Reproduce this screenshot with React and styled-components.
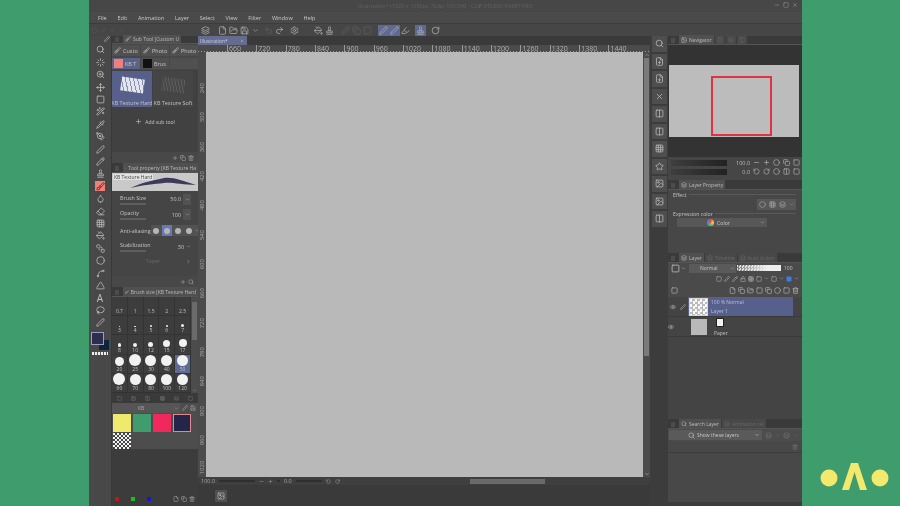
import React from "react";
import styled, { createGlobalStyle } from "styled-components";
import {
  Search, Loader, ZoomIn, Move, Square, Wand2, Pipette, PenTool, Pen, Pencil, Brush, Eraser, Droplet,
  Stamp, Grid3x3, PaintBucket, SquareStack, Circle, Spline, Triangle, Lasso, Plus, Copy, Trash2,
  File, FolderOpen, Save, Undo2, Redo2, Settings, FileUp, FileDown, X, Columns2, Star, Image, Eye,
  ChevronDown, ChevronUp, ChevronLeft, ChevronRight, ChevronsLeft, Lock, Layers, Minus,
  RotateCw, RotateCcw, Highlighter,
} from "lucide-react";

const Global = createGlobalStyle`
  html, body { margin: 0; padding: 0; background: #3f9d6d; }
  body { font-family: "Open Sans", "Liberation Sans", sans-serif; }
`;

const Stage = styled.div`
  display: flex;
  width: 900px;
  height: 506px;
  overflow: hidden;
`;

const GreenLeft = styled.div`
  width: 89px;
  background: #3f9d6d;
`;

const GreenRight = styled.div`
  width: 98px;
  background: #3f9d6d;
  display: flex;
  align-items: flex-end;
  padding: 0 0 14px 18px;
  box-sizing: border-box;
`;

const Window = styled.div`
  width: 713px;
  display: flex;
  flex-direction: column;
  background: #444;
  color: #c4c4c4;
  filter: blur(0.35px);
`;

const TitleBar = styled.div`
  height: 12px;
  display: flex;
  align-items: center;
  justify-content: center;
  position: relative;
  background: #474747;
  font-size: 5.5px;
  color: #626262;
`;

const WinButtons = styled.div`
  position: absolute;
  right: 4px;
  top: 2px;
  display: flex;
  gap: 3px;
  color: #999;
`;

const MenuBar = styled.div`
  height: 11px;
  display: flex;
  align-items: center;
  gap: 10.7px;
  padding-left: 9px;
  background: #4a4a4a;
  font-size: 5.5px;
  color: #c8c8c8;
`;

const ToolBar = styled.div`
  height: 13px;
  display: flex;
  align-items: center;
  background: #464646;
  border-top: 1px solid #3c3c3c;
  box-sizing: border-box;
  color: #b0b0b0;
`;

const ToolLead = styled.div`
  width: 111px;
  flex: none;
  display: flex;
  align-items: center;
  gap: 4px;
  padding-left: 3px;
  box-sizing: border-box;
  color: #626262;
`;

const ToolBtn = styled.span`
  width: 11px;
  height: 11px;
  flex: none;
  display: inline-flex;
  align-items: center;
  justify-content: center;
  background: ${(p) => (p.$on ? "#5f6a94" : "transparent")};
  color: ${(p) => (p.$dim ? "#5e5e5e" : "inherit")};
`;

const ToolGap = styled.span`
  width: ${(p) => p.$w || 4}px;
  flex: none;
`;

const Body = styled.div`
  flex: 1;
  display: flex;
  min-height: 0;
`;

const ToolStrip = styled.div`
  width: 23px;
  display: flex;
  flex-direction: column;
  align-items: center;
  gap: 2.4px;
  background: #484848;
  border-right: 1px solid #383838;
  box-sizing: border-box;
  color: #c0c0c0;
`;

const StripHead = styled.div`
  width: 100%;
  height: 6.6px;
  flex: none;
  display: flex;
  align-items: center;
  justify-content: flex-end;
  padding-right: 1px;
  box-sizing: border-box;
`;

const StripIcon = styled.span`
  width: 10px;
  height: 10px;
  flex: none;
  display: flex;
  align-items: center;
  justify-content: center;
  font-size: 10px;
  line-height: 10px;
  background: ${(p) => (p.$on ? "#ef7f78" : "transparent")};
  color: ${(p) => (p.$on ? "#5a2020" : "inherit")};
`;

const ColorChip = styled.div`
  position: relative;
  width: 18px;
  height: 18px;
  margin-top: 2px;
  flex: none;
`;

const ChipBack = styled.div`
  position: absolute;
  right: 0;
  bottom: 0;
  width: 10px;
  height: 10px;
  background: #10233a;
`;

const ChipFront = styled.div`
  position: absolute;
  left: 0;
  top: 0;
  width: 11px;
  height: 11px;
  background: #2d2d4d;
  border: 1px solid #9a9fc0;
`;

const Stripes = styled.div`
  width: 16px;
  height: 3px;
  flex: none;
  background: repeating-linear-gradient(90deg, #eee 0 2px, #555 2px 3px);
`;

const LeftDock = styled.div`
  width: 86px;
  display: flex;
  flex-direction: column;
  background: #3c3c3c;
`;

const TabStrip = styled.div`
  height: ${(p) => p.$h || 10}px;
  flex: none;
  display: flex;
  align-items: flex-end;
  padding-left: 3px;
  gap: 1px;
  background: #3a3a3a;
  border-bottom: 1px solid #555;
  box-sizing: border-box;
  &::before {
    content: "";
    width: 4px;
    height: 5px;
    margin: 0 3px 1px 0;
    background: #4c4c4c;
  }
`;

const Tab = styled.div`
  height: ${(p) => p.$h || 9}px;
  display: flex;
  align-items: center;
  gap: 2px;
  padding: 0 2px;
  font-size: 5px;
  white-space: nowrap;
  overflow: hidden;
  background: ${(p) => (p.$dim ? "#484848" : "#505050")};
  color: ${(p) => (p.$dim ? "#6a6a6a" : "#bdbdbd")};
`;

const SubPanel = styled.div`
  height: 119px;
  flex: none;
  display: flex;
  flex-direction: column;
  background: #414141;
`;

const GroupRow = styled.div`
  height: 13px;
  flex: none;
  display: flex;
  align-items: center;
  gap: 1.5px;
  background: #474747;
`;

const GroupChip = styled.div`
  flex: ${(p) => (p.$fill ? 1 : "none")};
  width: ${(p) => p.$w || 27.5}px;
  height: 11px;
  display: flex;
  align-items: center;
  gap: 2px;
  padding-left: 2px;
  box-sizing: border-box;
  overflow: hidden;
  white-space: nowrap;
  font-size: 5.5px;
  background: ${(p) => (p.$on ? "#5a648a" : "#505050")};
`;

const ChipIcon = styled.span`
  width: 9px;
  height: 9px;
  flex: none;
  background: ${(p) => p.$bg};
`;

const TileRow = styled.div`
  display: flex;
  gap: 1px;
  margin-top: 1px;
`;

const Tile = styled.div`
  width: 40px;
  height: 36px;
  display: flex;
  flex-direction: column;
  align-items: center;
  justify-content: space-between;
  font-size: 5.4px;
  line-height: 7px;
  white-space: nowrap;
  overflow: hidden;
  padding-top: 7px;
  box-sizing: border-box;
  background: ${(p) => (p.$on ? "#56608a" : "#454545")};
`;

const TileArt = styled.div`
  width: 23px;
  height: 14px;
  transform: rotate(8deg);
  background: ${(p) =>
    p.$on
      ? "repeating-linear-gradient(70deg, #e4e4ee 0 3px, #8a90b0 3px 4px)"
      : "repeating-linear-gradient(70deg, #5c5c5c 0 1px, #494949 1px 3px)"};
`;

const AddSub = styled.div`
  display: flex;
  align-items: center;
  justify-content: center;
  gap: 3px;
  margin-top: 11px;
  font-size: 5px;
  color: #c8c8c8;
`;

const PanelFoot = styled.div`
  margin-top: auto;
  height: ${(p) => p.$h || 11}px;
  flex: none;
  display: flex;
  align-items: center;
  justify-content: flex-end;
  gap: 2px;
  padding-right: 4px;
  background: #484848;
  color: #aaa;
`;

const PropPanel = styled.div`
  height: 114px;
  flex: none;
  display: flex;
  flex-direction: column;
  background: #454545;
`;

const BrushPreview = styled.div`
  height: 18px;
  flex: none;
  position: relative;
  background: #c9c9c9;
`;

const PreviewLabel = styled.span`
  position: absolute;
  left: 1px;
  top: 1px;
  padding: 0 1px;
  background: #e2e2e2;
  color: #444;
  font-size: 5px;
`;

const PropRow = styled.div`
  height: ${(p) => p.$h}px;
  flex: none;
  display: flex;
  align-items: center;
  justify-content: space-between;
  padding: 0 7px 0 8px;
  font-size: 5.4px;
  white-space: nowrap;
`;

const PropLabel = styled.div`
  display: flex;
  flex-direction: column;
  gap: 1px;
`;

const MiniBar = styled.div`
  width: 26px;
  height: 2px;
  background: #5e5e5e;
`;

const PropValue = styled.div`
  display: flex;
  align-items: center;
  gap: 2px;
`;

const Square8 = styled.span`
  width: 8px;
  height: 11px;
  display: inline-flex;
  align-items: center;
  justify-content: center;
  background: #525252;
`;

const AaGroup = styled.div`
  display: flex;
  align-items: center;
  height: 11px;
  gap: 1px;
  background: #525252;
`;

const AaDot = styled.span`
  width: 10px;
  height: 11px;
  display: flex;
  align-items: center;
  justify-content: center;
  background: ${(p) => (p.$on ? "#6a78b0" : "transparent")};
  &::before {
    content: "";
    width: 6px;
    height: 6px;
    border-radius: 50%;
    background: #b5b5b5;
  }
`;

const TaperLabel = styled.span`
  flex: 1;
  text-align: center;
  color: #666;
`;

const SizeGrid = styled.div`
  height: 96px;
  flex: none;
  display: flex;
  background: #3d3d3d;
`;

const SizeCells = styled.div`
  width: 80px;
  display: grid;
  grid-template-columns: repeat(5, 1fr);
  grid-auto-rows: 19.2px;
`;

const SizeCell = styled.div`
  display: flex;
  flex-direction: column;
  align-items: center;
  justify-content: flex-end;
  padding-bottom: 1px;
  font-size: 5px;
  color: #c0c0c0;
  line-height: 6px;
  border-right: 1px solid #333;
  border-bottom: 1px solid #333;
  box-sizing: border-box;
  background: ${(p) => (p.$on ? "#5f6a94" : "transparent")};
`;

const SizeDot = styled.span`
  border-radius: 50%;
  background: #f2f2f2;
  flex: none;
  width: ${(p) => p.$d}px;
  height: ${(p) => p.$d}px;
`;

const ScrollTrack = styled.div`
  flex: 1;
  display: flex;
  flex-direction: column;
  background: #4c4c4c;
  padding: 5px 1px 0;
  color: #999;
`;

const ScrollThumb = styled.div`
  height: ${(p) => p.$h}px;
  margin-bottom: auto;
  background: #6a6a6a;
`;

const ColorPanel = styled.div`
  flex: 1;
  display: flex;
  flex-direction: column;
  background: #3c3c3c;
`;

const IconTabs = styled.div`
  height: 10px;
  flex: none;
  display: flex;
  align-items: center;
  justify-content: space-around;
  background: #3a3a3a;
  color: #7c7c7c;
`;

const SetRow = styled.div`
  height: 10px;
  flex: none;
  display: flex;
  align-items: center;
  gap: 2px;
  background: #4d4d4d;
  font-size: 5px;
  color: #aaa;
`;

const SetSelect = styled.div`
  width: 68px;
  height: 100%;
  display: flex;
  align-items: center;
  justify-content: space-between;
  padding: 0 1px 0 26px;
  box-sizing: border-box;
  background: #555;
`;

const Swatches = styled.div`
  height: 36px;
  flex: none;
  display: grid;
  grid-template-columns: repeat(4, 18px);
  grid-template-rows: 18px 16px;
  column-gap: 2px;
  row-gap: 1px;
  padding: 1px 0 0 1px;
  background: #4d4d4d;
  box-sizing: border-box;
`;

const Swatch = styled.div`
  background: ${(p) => p.$c};
  box-sizing: border-box;
  border: ${(p) => (p.$on ? "1px solid #e08a90" : "none")};
`;

const Checker = styled.div`
  background: repeating-conic-gradient(#444 0 25%, #f4f4f4 0 50%) 0 0 / 4px 4px;
`;

const ColorFoot = styled.div`
  margin-top: auto;
  height: 14px;
  flex: none;
  display: flex;
  align-items: center;
  padding: 0 3px;
  gap: 12px;
`;

const Tiny = styled.span`
  width: 4px;
  height: 4px;
  background: ${(p) => p.$c};
`;

const FootIcons = styled.span`
  margin-left: auto;
  display: flex;
  gap: 2px;
  color: #aaa;
`;

const Center = styled.div`
  width: 452px;
  display: flex;
  flex-direction: column;
  background: #3b3b3b;
`;

const DocTabs = styled.div`
  height: 9px;
  flex: none;
  display: flex;
  background: #3a3a3a;
`;

const DocTab = styled.div`
  width: 49px;
  display: flex;
  align-items: center;
  justify-content: space-between;
  padding: 0 3px 0 2px;
  box-sizing: border-box;
  background: #646c90;
  font-size: 5px;
  color: #c8cce0;
`;

const RulerTop = styled.div`
  height: 7px;
  flex: none;
  display: flex;
  align-items: flex-end;
  padding-left: 29px;
  background:
    repeating-linear-gradient(90deg, #999 0 1px, transparent 1px 3px) left bottom / 100% 1px no-repeat,
    #4b4b4b;
  font-size: 7px;
  line-height: 7px;
  color: #b0b0b0;
`;

const RulerMark = styled.span`
  width: 29.35px;
  flex: none;
  border-left: 1px solid #999;
  padding-left: 1px;
  box-sizing: border-box;
`;

const CanvasRow = styled.div`
  height: 425px;
  flex: none;
  display: flex;
`;

const RulerLeft = styled.div`
  width: 8px;
  flex: none;
  display: flex;
  flex-direction: column;
  padding-top: 12px;
  background: #4b4b4b;
  font-size: 6px;
  line-height: 8px;
  color: #a8a8a8;
  overflow: hidden;
`;

const RulerNum = styled.span`
  height: 29.35px;
  flex: none;
  writing-mode: vertical-rl;
  transform: rotate(180deg);
`;

const Paper = styled.div`
  flex: 1;
  background: #b9b9b9;
`;

const VScroll = styled.div`
  width: 7px;
  flex: none;
  display: flex;
  flex-direction: column;
  align-items: center;
  background: #4b4b4b;
  color: #bbb;
`;

const VThumb = styled.div`
  width: 5px;
  height: 298px;
  margin-bottom: auto;
  background: #7a7a7a;
`;

const StatusBar = styled.div`
  height: 8px;
  flex: none;
  display: flex;
  align-items: center;
  gap: 4px;
  padding-left: 3px;
  background: #3f3f3f;
  font-size: 5.5px;
  color: #a8a8a8;
`;

const ZoomSlider = styled.span`
  width: ${(p) => p.$w}px;
  height: 2px;
  background: #2f2f2f;
`;

const HThumb = styled.span`
  width: 75px;
  height: 5px;
  margin-left: 126px;
  background: #6a6a6a;
`;

const BottomDock = styled.div`
  flex: 1;
  display: flex;
  align-items: center;
  padding-left: 17px;
  background: #3a3a3a;
`;

const BottomButton = styled.span`
  width: 12px;
  height: 12px;
  display: flex;
  align-items: center;
  justify-content: center;
  background: #505050;
  color: #bbb;
`;

const RightStrip = styled.div`
  width: 18px;
  display: flex;
  flex-direction: column;
  align-items: center;
  gap: 2px;
  background: #3c3c3c;
  color: #bdbdbd;
`;

const RightBtn = styled.span`
  width: 15px;
  height: 15.5px;
  flex: none;
  display: flex;
  align-items: center;
  justify-content: center;
  background: #4e4e4e;
`;

const RightDock = styled.div`
  width: 134px;
  display: flex;
  flex-direction: column;
  background: #474747;
  border-bottom: 4px solid #3c3c3c;
  box-sizing: border-box;
`;

const NavDark = styled.div`
  height: 112px;
  flex: none;
  display: flex;
  flex-direction: column;
  justify-content: center;
  background: #333;
`;

const NavPaper = styled.div`
  height: 72px;
  margin: 0 3px 0 1px;
  display: flex;
  align-items: flex-end;
  padding: 0 0 1px 42px;
  background: #bcbcbc;
  box-sizing: border-box;
`;

const NavFrame = styled.div`
  width: 61px;
  height: 60px;
  border: 2px solid #e0323f;
  box-sizing: border-box;
`;

const NavControls = styled.div`
  height: 23px;
  flex: none;
  display: grid;
  grid-template-columns: 56px 1fr;
  grid-auto-rows: 9px;
  align-items: center;
  gap: 0 9px;
  padding: 1px 3px 0 3px;
  background: #464646;
  font-size: 5.5px;
  box-sizing: border-box;
`;

const Wedge = styled.span`
  height: 6px;
  background: linear-gradient(90deg, #3e3e3e, #222);
`;

const NavIcons = styled.span`
  display: flex;
  align-items: center;
  justify-content: flex-end;
  gap: 3px;
  color: #bbb;
`;

const EffectPanel = styled.div`
  height: 62px;
  flex: none;
  padding: 1px 6px 0 5px;
  font-size: 5.2px;
  background: #474747;
`;

const Legend = styled.div`
  display: flex;
  align-items: center;
  gap: 2px;
  height: 7px;
  &::after {
    content: "";
    flex: 1;
    height: 1px;
    background: #5a5a5a;
  }
`;

const EffectBtns = styled.div`
  width: 39px;
  height: 11px;
  margin: 1px 0 0 auto;
  display: flex;
  align-items: center;
  justify-content: space-around;
  background: #575757;
  color: #aaa;
`;

const ColorSelect = styled.div`
  width: 90px;
  height: 9px;
  margin: 1px 0 0 4px;
  padding: 0 2px 0 30px;
  display: flex;
  align-items: center;
  gap: 3px;
  box-sizing: border-box;
  background: #575757;
`;

const ColorWheel = styled.span`
  width: 7px;
  height: 7px;
  border-radius: 50%;
  background: conic-gradient(#e44, #ec4, #4c6, #48e, #e44);
`;

const LayerPanel = styled.div`
  height: 156px;
  flex: none;
  display: flex;
  flex-direction: column;
  background: #444;
`;

const BlendRow = styled.div`
  height: 10px;
  flex: none;
  display: flex;
  align-items: center;
  gap: 1px;
  padding-left: 3px;
  font-size: 5px;
  background: #4a4a4a;
`;

const BlendSelect = styled.div`
  width: 47px;
  height: 9px;
  margin-left: 2px;
  display: flex;
  align-items: center;
  justify-content: space-between;
  padding: 0 1px 0 11px;
  box-sizing: border-box;
  background: #5a5a5a;
`;

const Opacity = styled.span`
  width: 44px;
  height: 6px;
  margin-right: 2px;
  background:
    linear-gradient(90deg, transparent, #eee 70%),
    repeating-conic-gradient(#777 0 25%, #ddd 0 50%) 0 0 / 3px 3px;
`;

const IconRow = styled.div`
  height: ${(p) => p.$h}px;
  flex: none;
  display: flex;
  align-items: center;
  justify-content: flex-end;
  gap: 2px;
  padding: 0 3px;
  background: #4a4a4a;
  color: #bdbdbd;
`;

const LayerRow = styled.div`
  height: 20px;
  flex: none;
  display: flex;
  align-items: center;
  border-bottom: 1px solid #3a3a3a;
  box-sizing: border-box;
`;

const LayerFlags = styled.div`
  width: 20px;
  flex: none;
  display: flex;
  align-items: center;
  justify-content: space-around;
  color: #bbb;
`;

const LayerBody = styled.div`
  width: 105px;
  height: 100%;
  display: flex;
  align-items: center;
  gap: 3px;
  padding-left: 1px;
  box-sizing: border-box;
  font-size: 5px;
  background: ${(p) => (p.$on ? "#56608a" : "transparent")};
  color: ${(p) => (p.$on ? "#b8bfe0" : "#c0c0c0")};
`;

const Thumb = styled.div`
  width: 19px;
  height: 18px;
  flex: none;
  box-sizing: border-box;
  border: 1px solid #d8d8d8;
  background: repeating-conic-gradient(#bbb 0 25%, #f8f8f8 0 50%) 0 0 / 5px 5px;
`;

const PaperThumb = styled.div`
  width: 16px;
  height: 16px;
  flex: none;
  margin: 0 4px 0 2px;
  background: #b9b9b9;
`;

const LayerText = styled.div`
  display: flex;
  flex-direction: column;
  gap: 3px;
`;

const PaperGlyph = styled.span`
  width: 8px;
  height: 9px;
  margin-left: 2px;
  background: #f2f2f2;
  border: 1px solid #222;
  box-sizing: border-box;
`;

const SearchPanel = styled.div`
  flex: 1;
  display: flex;
  flex-direction: column;
  background: #484848;
`;

const SearchRow = styled.div`
  height: 12px;
  flex: none;
  display: flex;
  align-items: center;
  gap: 3px;
  font-size: 5px;
  color: #777;
  background: #4c4c4c;
`;

const SearchSelect = styled.div`
  width: 93px;
  height: 10px;
  margin-left: 1px;
  display: flex;
  align-items: center;
  gap: 2px;
  padding: 0 2px 0 19px;
  box-sizing: border-box;
  background: #5a5a5a;
  color: #c8c8c8;
`;

const SearchFoot = styled.div`
  height: 11px;
  flex: none;
  display: flex;
  justify-content: flex-end;
  align-items: center;
  padding-right: 4px;
  border-bottom: 1px solid #3c3c3c;
  color: #777;
`;

const Push = styled.span`
  margin-left: auto;
`;

const Logo = () => (
  <svg width="70" height="30" viewBox="0 0 70 30">
    <circle cx="9" cy="16" r="8.5" fill="#f3e96d" />
    <circle cx="60" cy="16" r="8.5" fill="#f3e96d" />
    <path d="M22 28 L31 1 H38 L47 28 H40 L34.5 10 L29 28 Z" fill="#f3e96d" />
  </svg>
);

const menus = ["File", "Edit", "Animation", "Layer", "Select", "View", "Filter", "Window", "Help"];
const tools = [
  Search, Loader, ZoomIn, Move, Square, Wand2, Pipette, PenTool, Pen, Pencil, Stamp, Brush,
  Droplet, Eraser, Grid3x3, PaintBucket, SquareStack, Circle, Spline, Triangle,
];
const rightBtns = [Search, FileUp, FileDown, X, Columns2, Columns2, Grid3x3, Star, Image, Image, Columns2];
const rulerTop = ["660", "720", "780", "840", "900", "960", "1020", "1080", "1140", "1200", "1260", "1320", "1380", "1440"];
const rulerLeft = ["240", "300", "360", "420", "480", "540", "600", "660", "720", "780", "840", "900", "960", "1020"];
const sizes = [
  ["0.7", 0], ["1", 0], ["1.5", 0], ["2", 0], ["2.5", 0],
  ["3", 1], ["4", 1.5], ["5", 2], ["6", 2], ["7", 3],
  ["8", 3.5], ["10", 4], ["12", 5], ["15", 7], ["17", 8],
  ["20", 9], ["25", 12], ["30", 11], ["40", 11], ["50", 11],
  ["60", 12], ["70", 11], ["80", 11], ["100", 11], ["120", 11],
];

export default function App() {
  return (
    <>
      <Global />
      <Stage>
        <GreenLeft />
        <Window>
          <TitleBar>
            Illustration* (1920 x 1080px 72dpi 100.0%)  -  CLIP STUDIO PAINT PRO
            <WinButtons>
              <Minus size={6} />
              <Square size={6} />
              <X size={6} />
            </WinButtons>
          </TitleBar>
          <MenuBar>
            {menus.map((m) => (
              <span key={m}>{m}</span>
            ))}
          </MenuBar>
          <ToolBar>
            <ToolLead>
              <Square size={5} />
              <Pen size={5} />
              <ChevronsLeft size={5} />
              <ChevronLeft size={5} />
            </ToolLead>
            <ToolBtn><Layers size={9} /></ToolBtn>
            <ToolGap $w={6} />
            <ToolBtn><File size={9} /></ToolBtn>
            <ToolBtn><FolderOpen size={9} /></ToolBtn>
            <ToolBtn><Save size={9} /></ToolBtn>
            <ToolBtn><ChevronDown size={7} /></ToolBtn>
            <ToolGap $w={2} />
            <ToolBtn $dim><Undo2 size={9} /></ToolBtn>
            <ToolBtn><Redo2 size={9} /></ToolBtn>
            <ToolGap $w={4} />
            <ToolBtn><Settings size={9} /></ToolBtn>
            <ToolGap $w={13} />
            <ToolBtn><PaintBucket size={9} /></ToolBtn>
            <ToolBtn><Stamp size={9} /></ToolBtn>
            <ToolGap $w={5} />
            <ToolBtn $dim><Pen size={9} /></ToolBtn>
            <ToolBtn $dim><Copy size={9} /></ToolBtn>
            <ToolBtn $dim><Square size={9} /></ToolBtn>
            <ToolGap $w={5} />
            <ToolBtn $on><Pen size={9} /></ToolBtn>
            <ToolBtn $on><Pen size={9} /></ToolBtn>
            <ToolBtn><Highlighter size={9} /></ToolBtn>
            <ToolGap $w={4} />
            <ToolBtn $on><Stamp size={9} /></ToolBtn>
            <ToolGap $w={4} />
            <ToolBtn><RotateCw size={9} /></ToolBtn>
          </ToolBar>
          <Body>
            <ToolStrip>
              <StripHead><Pen size={6} /></StripHead>
              {tools.map((T, i) => (
                <StripIcon key={i} $on={T === Brush}>
                  <T size={9} />
                </StripIcon>
              ))}
              <StripIcon>A</StripIcon>
              <StripIcon><Lasso size={9} /></StripIcon>
              <StripIcon><Pen size={9} /></StripIcon>
              <ColorChip>
                <ChipBack />
                <ChipFront />
              </ColorChip>
              <Stripes />
            </ToolStrip>

            <LeftDock>
              <TabStrip $h={8}>
                <Tab $h={8}><Brush size={6} />Sub Tool [Custom U</Tab>
              </TabStrip>
              <SubPanel>
                <GroupRow>
                  <GroupChip><Brush size={7} />Custo</GroupChip>
                  <GroupChip><Brush size={7} />Photo</GroupChip>
                  <GroupChip $fill><Brush size={7} />Photo</GroupChip>
                </GroupRow>
                <GroupRow>
                  <GroupChip $on><ChipIcon $bg="#ef7f78" />KB T</GroupChip>
                  <GroupChip><ChipIcon $bg="#111" />Brus</GroupChip>
                  <GroupChip $fill />
                </GroupRow>
                <TileRow>
                  <Tile $on><TileArt $on />KB Texture Hard</Tile>
                  <Tile><TileArt />KB Texture Soft</Tile>
                </TileRow>
                <AddSub><Plus size={7} />Add sub tool</AddSub>
                <PanelFoot>
                  <Plus size={6} />
                  <Copy size={6} />
                  <Trash2 size={6} />
                </PanelFoot>
              </SubPanel>

              <TabStrip>
                <Tab><Brush size={6} />Tool property [KB Texture Ha</Tab>
              </TabStrip>
              <PropPanel>
                <BrushPreview>
                  <svg width="86" height="18" viewBox="0 0 86 18">
                    <path d="M18 15 C34 8 44 7 52 5 C62 4 70 8 84 12 C70 12 60 9 52 10 C42 11 32 12 18 15 Z" fill="#3d3a5a" />
                  </svg>
                  <PreviewLabel>KB Texture Hard</PreviewLabel>
                </BrushPreview>
                <PropRow $h={16}>
                  <PropLabel>Brush Size<MiniBar /></PropLabel>
                  <PropValue>50.0 <Square8><ChevronDown size={5} /></Square8></PropValue>
                </PropRow>
                <PropRow $h={15}>
                  <PropLabel>Opacity<MiniBar /></PropLabel>
                  <PropValue>100 <Square8><ChevronDown size={5} /></Square8></PropValue>
                </PropRow>
                <PropRow $h={17}>
                  Anti-aliasing
                  <AaGroup>
                    <AaDot /><AaDot $on /><AaDot /><AaDot />
                    <ChevronDown size={5} />
                  </AaGroup>
                </PropRow>
                <PropRow $h={15}>
                  <PropLabel>Stabilization<MiniBar /></PropLabel>
                  <PropValue>30 <ChevronDown size={5} /></PropValue>
                </PropRow>
                <PropRow $h={14}>
                  <TaperLabel>Taper</TaperLabel>
                  <ChevronRight size={5} />
                </PropRow>
                <PanelFoot>
                  <Plus size={6} />
                  <Search size={6} />
                </PanelFoot>
              </PropPanel>

              <TabStrip>
                <Tab><Brush size={6} />Brush size [KB Texture Hard</Tab>
              </TabStrip>
              <SizeGrid>
                <SizeCells>
                  {sizes.map(([label, d]) => (
                    <SizeCell key={label} $on={label === "50"}>
                      {d > 0 && <SizeDot $d={d} />}
                      {label}
                    </SizeCell>
                  ))}
                </SizeCells>
                <ScrollTrack>
                  <ScrollThumb $h={38} />
                  <ChevronDown size={5} />
                </ScrollTrack>
              </SizeGrid>

              <ColorPanel>
                <IconTabs>
                  <Square size={5} /><Image size={5} /><Columns2 size={5} /><Grid3x3 size={5} /><Layers size={5} /><Square size={5} />
                </IconTabs>
                <SetRow>
                  <SetSelect>KB <ChevronDown size={5} /></SetSelect>
                  <Pen size={6} />
                  <Save size={6} />
                </SetRow>
                <Swatches>
                  <Swatch $c="#efe96d" />
                  <Swatch $c="#3f9d6d" />
                  <Swatch $c="#f0285c" />
                  <Swatch $c="#25254a" $on />
                  <Checker />
                </Swatches>
                <ColorFoot>
                  <Tiny $c="#c01818" />
                  <Tiny $c="#18c018" />
                  <Tiny $c="#1818d0" />
                  <FootIcons>
                    <File size={6} />
                    <Copy size={6} />
                    <Trash2 size={6} />
                  </FootIcons>
                </ColorFoot>
              </ColorPanel>
            </LeftDock>

            <Center>
              <DocTabs>
                <DocTab>Illustration*<X size={4} /></DocTab>
              </DocTabs>
              <RulerTop>
                {rulerTop.map((n) => (
                  <RulerMark key={n}>{n}</RulerMark>
                ))}
              </RulerTop>
              <CanvasRow>
                <RulerLeft>
                  {rulerLeft.map((n) => (
                    <RulerNum key={n}>{n}</RulerNum>
                  ))}
                </RulerLeft>
                <Paper />
                <VScroll>
                  <ChevronUp size={6} />
                  <VThumb />
                  <ChevronDown size={6} />
                </VScroll>
              </CanvasRow>
              <StatusBar>
                100.0
                <ZoomSlider $w={36} />
                <Minus size={5} />
                <Plus size={5} />
                <ZoomSlider $w={3} />
                0.0
                <ZoomSlider $w={26} />
                <RotateCcw size={5} />
                <RotateCw size={5} />
                <HThumb />
              </StatusBar>
              <BottomDock>
                <BottomButton><Image size={8} /></BottomButton>
              </BottomDock>
            </Center>

            <RightStrip>
              {rightBtns.map((T, i) => (
                <RightBtn key={i}><T size={9} /></RightBtn>
              ))}
            </RightStrip>

            <RightDock>
              <TabStrip $h={9}>
                <Tab><Image size={6} />Navigator</Tab>
                <Tab $dim><Columns2 size={6} /></Tab>
                <Tab $dim><Layers size={6} /></Tab>
                <Tab $dim><Columns2 size={6} /></Tab>
              </TabStrip>
              <NavDark>
                <NavPaper><NavFrame /></NavPaper>
              </NavDark>
              <NavControls>
                <Wedge />
                <NavIcons>100.0 <Minus size={7} /><Plus size={7} /><Circle size={7} /><Copy size={7} /><Square size={7} /></NavIcons>
                <Wedge />
                <NavIcons>0.0 <RotateCcw size={7} /><RotateCw size={7} /><Circle size={7} /><Columns2 size={7} /><Square size={7} /></NavIcons>
              </NavControls>
              <TabStrip>
                <Tab><Layers size={6} />Layer Property</Tab>
              </TabStrip>
              <EffectPanel>
                <Legend>Effect</Legend>
                <EffectBtns>
                  <Circle size={7} /><Grid3x3 size={7} /><Layers size={7} /><ChevronDown size={5} />
                </EffectBtns>
                <Legend>Expression color</Legend>
                <ColorSelect>
                  <ColorWheel />
                  Color
                  <Push />
                  <ChevronDown size={5} />
                </ColorSelect>
              </EffectPanel>
              <TabStrip>
                <Tab><Layers size={6} />Layer</Tab>
                <Tab $dim><Layers size={6} />Timeline</Tab>
                <Tab $dim><Layers size={6} />Auto Action</Tab>
              </TabStrip>
              <LayerPanel>
                <BlendRow>
                  <Square size={9} />
                  <ChevronDown size={5} />
                  <BlendSelect>Normal <ChevronDown size={5} /></BlendSelect>
                  <Opacity />
                  100
                </BlendRow>
                <IconRow $h={11}>
                  <Square size={6} /><Pen size={6} /><Pencil size={6} /><Lock size={6} /><Grid3x3 size={6} /><Square size={6} /><ChevronDown size={5} /><Square size={6} /><ChevronDown size={5} /><Square size={6} color="#3d7ee0" fill="#3d7ee0" /><ChevronDown size={5} />
                </IconRow>
                <IconRow $h={13}>
                  <Square size={7} />
                  <Push />
                  <File size={7} /><Copy size={7} /><FolderOpen size={7} /><Square size={7} /><Copy size={7} /><Circle size={7} /><Square size={7} /><Trash2 size={7} />
                </IconRow>
                <LayerRow>
                  <LayerFlags><Eye size={6} /><Pen size={6} /></LayerFlags>
                  <LayerBody $on>
                    <Thumb />
                    <LayerText><span>100 % Normal</span><span>Layer 1</span></LayerText>
                  </LayerBody>
                </LayerRow>
                <LayerRow>
                  <LayerFlags><Eye size={6} /><Push /></LayerFlags>
                  <LayerBody>
                    <PaperThumb />
                    <LayerText><PaperGlyph /><span>Paper</span></LayerText>
                  </LayerBody>
                </LayerRow>
              </LayerPanel>
              <TabStrip>
                <Tab><Search size={6} />Search Layer</Tab>
                <Tab $dim><Layers size={6} />Animation cel</Tab>
              </TabStrip>
              <SearchPanel>
                <SearchRow>
                  <SearchSelect>
                    <Search size={7} />
                    Show these layers
                    <Push />
                    <ChevronDown size={6} />
                  </SearchSelect>
                  <Layers size={7} />
                  <ChevronDown size={5} />
                  <Layers size={7} />
                  <ChevronDown size={5} />
                </SearchRow>
                <SearchFoot><Trash2 size={6} /></SearchFoot>
              </SearchPanel>
            </RightDock>
          </Body>
        </Window>
        <GreenRight>
          <Logo />
        </GreenRight>
      </Stage>
    </>
  );
}
